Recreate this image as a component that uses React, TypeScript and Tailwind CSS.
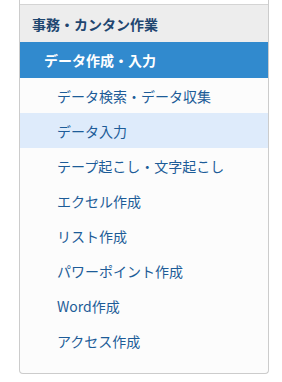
import React from 'react';

const ITEMS = [
  'データ検索・データ収集',
  'データ入力',
  'テープ起こし・文字起こし',
  'エクセル作成',
  'リスト作成',
  'パワーポイント作成',
  'Word作成',
  'アクセス作成',
];

const ACTIVE = 'データ入力';

export default function App() {
  return (
    <div className="w-[282px] h-[382px] bg-white pl-[19px] font-['Noto_Sans_CJK_JP','Noto_Sans',sans-serif]">
      <div className="w-[250px] border-x border-b border-[#cccccc] rounded-b-[4px] bg-[#fcfcfc] pb-[15px]">
        <div className="h-[4px] bg-white" />
        <div className="h-[38px] border-t border-[#d4d4d4] bg-[#ededed] pl-[12px] flex items-center text-[14px] font-bold text-[#1f4670] leading-none">
          事務・カンタン作業
        </div>
        <div className="h-[36px] bg-[#318ace] pl-[24px] flex items-center text-[14px] font-bold text-white leading-none">
          データ作成・入力
        </div>
        <ul>
          {ITEMS.map((item) => (
            <li
              key={item}
              className={`h-[35px] pl-[37px] flex items-center text-[14px] leading-none text-[#1d5c98] ${
                item === ACTIVE ? 'bg-[#deebfb]' : ''
              }`}
            >
              {item}
            </li>
          ))}
        </ul>
      </div>
    </div>
  );
}
